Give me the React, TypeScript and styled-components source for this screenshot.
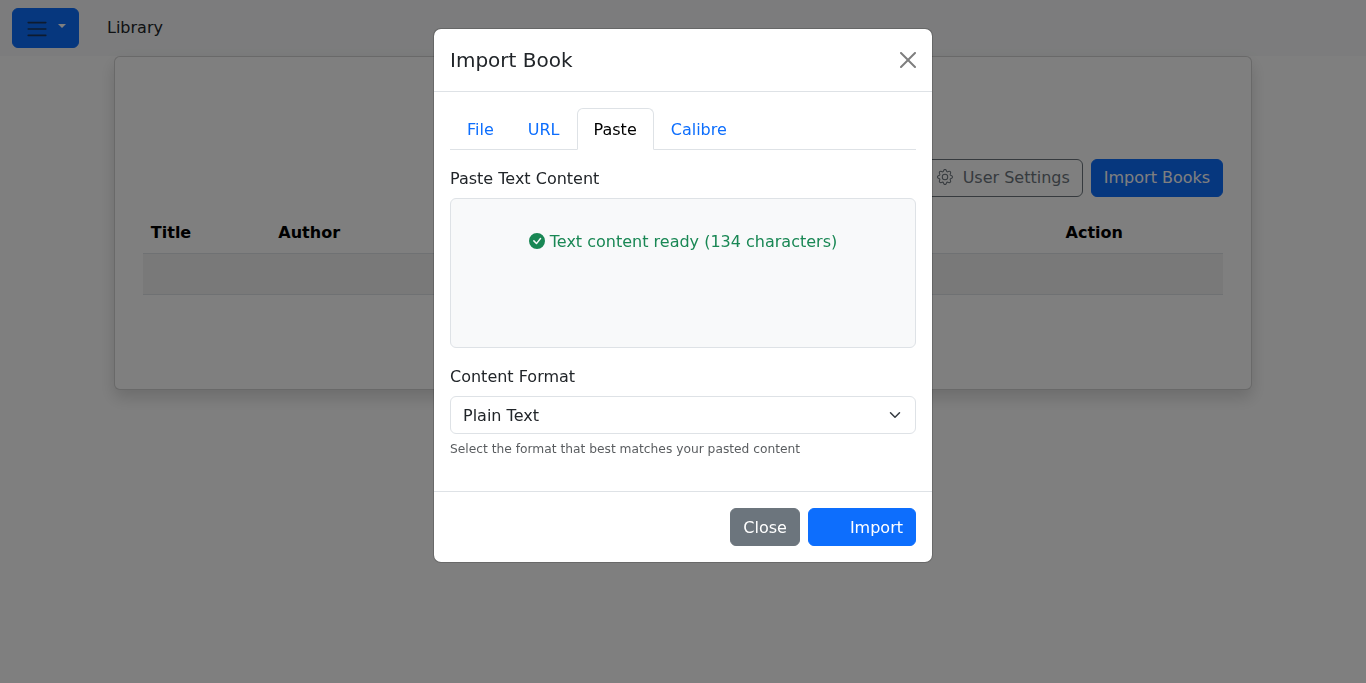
import React from "react";
import styled, { createGlobalStyle, css } from "styled-components";
import { BsCheckCircleFill, BsGear } from "react-icons/bs";

const GlobalStyle = createGlobalStyle`
  *, *::before, *::after { box-sizing: border-box; }
  html, body, #root { height: 100%; }
  body {
    margin: 0;
    overflow: hidden;
    background: #fff;
    color: #212529;
    font-family: "DejaVu Sans", sans-serif;
    font-size: 16px;
    line-height: 1.5;
  }
`;

const Navbar = styled.header`
  display: flex;
  align-items: center;
  height: 56px;
  padding: 8px 12px;
  background: #f8f9fa;
`;

type Variant = "primary" | "secondary" | "outline";

const variants = {
  primary: css`
    color: #fff;
    background: #0d6efd;
    border-color: #0d6efd;
  `,
  secondary: css`
    color: #fff;
    background: #6c757d;
    border-color: #6c757d;
  `,
  outline: css`
    color: #6c757d;
    background: transparent;
    border-color: #6c757d;
  `,
};

const Button = styled.button<{ $variant: Variant }>`
  display: inline-flex;
  align-items: center;
  height: 38px;
  padding: 6px 12px;
  border: 1px solid;
  border-radius: 6px;
  font: inherit;
  white-space: nowrap;
  ${({ $variant }) => variants[$variant]}
`;

const MenuButton = styled(Button)`
  height: 40px;
  width: 67px;
  justify-content: space-between;
`;

const TogglerIcon = styled.svg`
  width: 24px;
  height: 24px;
  margin-top: 2px;
`;

const Caret = styled.span`
  margin-bottom: 4px;
  border-top: 4.8px solid;
  border-left: 4.8px solid transparent;
  border-right: 4.8px solid transparent;
`;

const PageName = styled.span`
  margin-left: 28px;
`;

const Card = styled.main`
  width: 1138.34px;
  height: 334px;
  margin: 0 auto;
  padding: 102px 28px 28px;
  background: #fff;
  border: 1px solid rgba(0, 0, 0, 0.175);
  border-radius: 6px;
  box-shadow: 0 8px 16px rgba(0, 0, 0, 0.15);
`;

const Actions = styled.div`
  display: flex;
  justify-content: flex-end;
  gap: 8px;
  margin-bottom: 16px;

  svg {
    margin: 0 9.5px 2px 0;
  }
`;

const Table = styled.table`
  width: 100%;
  border-collapse: collapse;
  table-layout: fixed;
  color: #000;
`;

const HeadCell = styled.th<{ $width?: number }>`
  width: ${({ $width }) => ($width ? `${$width}px` : "auto")};
  padding: 8px;
  text-align: left;
  border-bottom: 1px solid #dee2e6;
`;

const EmptyCell = styled.td`
  height: 41px;
  padding: 8px;
  background: rgba(0, 0, 0, 0.05);
  border-bottom: 1px solid #dee2e6;
`;

const Overlay = styled.div`
  position: fixed;
  inset: 0;
  display: flex;
  justify-content: center;
  align-items: flex-start;
  padding-top: 28px;
  background: rgba(0, 0, 0, 0.5);
`;

const Dialog = styled.section`
  width: 500px;
  background: #fff;
  background-clip: padding-box;
  border: 1px solid rgba(0, 0, 0, 0.175);
  border-radius: 8px;
`;

const DialogHeader = styled.div`
  display: flex;
  align-items: center;
  justify-content: space-between;
  padding: 16px;
  border-bottom: 1px solid #dee2e6;
`;

const DialogTitle = styled.h5`
  margin: 0;
  font-size: 20px;
  font-weight: 500;
  line-height: 30px;
`;

const CloseIcon = styled.button`
  display: flex;
  padding: 0;
  border: 0;
  background: none;
  color: #000;
  opacity: 0.5;
`;

const DialogBody = styled.div`
  height: 399px;
  padding: 16px;
`;

const Tabs = styled.nav`
  display: flex;
  margin-bottom: 16px;
  border-bottom: 1px solid #dee2e6;
`;

const Tab = styled.button<{ $active?: boolean }>`
  height: 42px;
  margin-bottom: -1px;
  padding: 9px 16px 7px;
  border: 1px solid transparent;
  border-radius: 6px 6px 0 0;
  background: none;
  color: #0d6efd;
  font: inherit;
  ${({ $active }) =>
    $active &&
    css`
      color: #000;
      background: #fff;
      border-color: #dee2e6 #dee2e6 #fff;
    `}
`;

const Label = styled.div`
  padding-top: 1px;
  margin-bottom: 7px;
`;

const PasteArea = styled.div`
  display: flex;
  align-items: flex-start;
  justify-content: center;
  gap: 5px;
  height: 150px;
  margin-bottom: 16px;
  padding-top: 31px;
  color: #198754;
  background: #f8f9fa;
  border: 1px solid #dee2e6;
  border-radius: 6px;

  svg {
    margin-top: 3px;
  }
`;

const Select = styled.div`
  display: flex;
  align-items: center;
  justify-content: space-between;
  height: 38px;
  padding: 6px 12px;
  border: 1px solid #dee2e6;
  border-radius: 6px;

  span {
    padding-top: 2px;
  }
`;

const HelpText = styled.div`
  margin-top: 6px;
  font-size: 12.25px;
  color: rgba(33, 37, 41, 0.75);
`;

const DialogFooter = styled.div`
  display: flex;
  justify-content: flex-end;
  gap: 8px;
  padding: 16px;
  border-top: 1px solid #dee2e6;
`;

const FooterButton = styled(Button)<{ $wide?: boolean }>`
  padding: 7px 12px 5px ${({ $wide }) => ($wide ? 41 : 12)}px;
`;

const tabs = ["File", "URL", "Paste", "Calibre"];

export default function App() {
  return (
    <>
      <GlobalStyle />
      <Navbar>
        <MenuButton $variant="primary" aria-label="Menu">
          <TogglerIcon viewBox="0 0 30 30">
            <path
              d="M4 7h22M4 15h22M4 23h22"
              fill="none"
              stroke="rgba(33,37,41,0.75)"
              strokeWidth="2"
              strokeLinecap="round"
              strokeMiterlimit="10"
            />
          </TogglerIcon>
          <Caret />
        </MenuButton>
        <PageName>Library</PageName>
      </Navbar>
      <Card>
        <Actions>
          <Button $variant="outline">
            <BsGear size={16} />
            User Settings
          </Button>
          <Button $variant="primary">Import Books</Button>
        </Actions>
        <Table>
          <thead>
            <tr>
              <HeadCell $width={127.5}>Title</HeadCell>
              <HeadCell>Author</HeadCell>
              <HeadCell $width={165.6}>Action</HeadCell>
            </tr>
          </thead>
          <tbody>
            <tr>
              <EmptyCell colSpan={3} />
            </tr>
          </tbody>
        </Table>
      </Card>
      <Overlay>
        <Dialog role="dialog" aria-label="Import Book">
          <DialogHeader>
            <DialogTitle>Import Book</DialogTitle>
            <CloseIcon aria-label="Close">
              <svg width="16" height="16" viewBox="0 0 16 16" fill="currentColor">
                <path d="M.293.293a1 1 0 0 1 1.414 0L8 6.586 14.293.293a1 1 0 1 1 1.414 1.414L9.414 8l6.293 6.293a1 1 0 0 1-1.414 1.414L8 9.414l-6.293 6.293a1 1 0 0 1-1.414-1.414L6.586 8 .293 1.707a1 1 0 0 1 0-1.414z" />
              </svg>
            </CloseIcon>
          </DialogHeader>
          <DialogBody>
            <Tabs>
              {tabs.map((name) => (
                <Tab key={name} $active={name === "Paste"}>
                  {name}
                </Tab>
              ))}
            </Tabs>
            <Label>Paste Text Content</Label>
            <PasteArea>
              <BsCheckCircleFill size={16} />
              <span>Text content ready (134 characters)</span>
            </PasteArea>
            <Label>Content Format</Label>
            <Select>
              <span>Plain Text</span>
              <svg width="16" height="12" viewBox="0 0 16 16">
                <path
                  d="m2 5 6 6 6-6"
                  fill="none"
                  stroke="#343a40"
                  strokeWidth="2"
                  strokeLinecap="round"
                  strokeLinejoin="round"
                />
              </svg>
            </Select>
            <HelpText>Select the format that best matches your pasted content</HelpText>
          </DialogBody>
          <DialogFooter>
            <FooterButton $variant="secondary">Close</FooterButton>
            <FooterButton $variant="primary" $wide>
              Import
            </FooterButton>
          </DialogFooter>
        </Dialog>
      </Overlay>
    </>
  );
}
